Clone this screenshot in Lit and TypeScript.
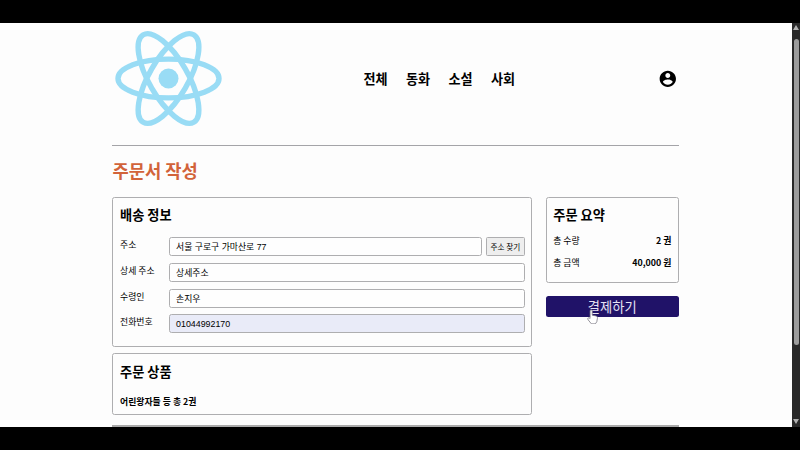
import { LitElement, html, css, svg } from "lit";
import { customElement } from "lit/decorators.js";

@customElement("app-root")
export class AppRoot extends LitElement {
  static styles = css`
    :host { display: block; width: 800px; height: 450px; overflow: hidden; background: #000;
      font-family: "Noto Sans CJK KR", sans-serif; font-size: 8.85px; color: #000; }
    * { box-sizing: border-box; }
    .screen { margin-top: 23px; height: 404px; display: flex; overflow: hidden; position: relative; }
    .page { width: 792px; background: #fdfdfd; padding-left: 112.4px; padding-right: 113px; overflow: hidden; }
    header { height: 123px; border-bottom: 1px solid #a4a4a8; display: grid; grid-template-columns: 110px 1fr 110px; }
    .logo { width: 110px; height: 110px; margin: 1px 0 0 0.6px; display: block; }
    nav { display: flex; gap: 18.4px; justify-content: center; font-weight: 700; font-size: 13.1px; line-height: 20px; padding-top: 46px; color: #000; margin-left: 87px; }
    .user { width: 19.6px; height: 19.6px; justify-self: end; margin: 45.8px 1.5px 0 0; }
    h1 { margin: 11px 0 14px; font-size: 17.7px; line-height: 26px; color: #d2633a; font-weight: 700; }
    .cols { display: flex; align-items: flex-start; gap: 13.2px; }
    .left { width: 420.2px; display: flex; flex-direction: column; gap: 6px; }
    .right { width: 133.5px; }
    .card { border: 1px solid #aeaeb0; border-radius: 2.5px; padding: 7px 6.7px; }
    .ship { height: 150px; }
    .items { height: 61.6px; padding-top: 8px; }
    .sum { height: 86px; }
    h2 { margin: 0; font-size: 13.2px; line-height: 20px; font-weight: 700; color: #000; }
    .fields { display: grid; gap: 6.6px; margin-top: 12.4px; }
    .row { display: flex; height: 19px; }
    .label { width: 48.5px; line-height: 15.4px; }
    .input { flex: 1; border: 1px solid #aeaeb0; border-radius: 2.5px; padding-left: 6.5px; line-height: 18px;
      font-family: "Liberation Sans", "Noto Sans CJK KR", sans-serif; background: #fefefe; }
    .filled { background: #e9ebf8; }
    .find { width: 38.5px; margin-left: 4.5px; border: 1px solid #aeaeb0; border-radius: 1.5px; background: #eeeeee;
      font-size: 7.6px; line-height: 18px; text-align: center; white-space: nowrap; }
    .line { display: flex; justify-content: space-between; line-height: 14px; margin-top: 8px; }
    .line:first-of-type { margin-top: 9px; }
    .bold { font-weight: 700; color: #000; }
    .goods { margin-top: 13px; line-height: 14px; }
    .pay { height: 20.6px; margin-top: 13px; border-radius: 2.5px; background: #201268; color: #e6e3f4; font-size: 13.3px;
      line-height: 21px; text-align: center; position: relative; }
    .cursor { position: absolute; left: 41.4px; top: 13px; width: 11px; height: 15.4px; }
    .end { height: 2px; margin-top: 10.6px; background: #aaaaaa; }
    .scroll { width: 8px; background: #292929; display: flex; flex-direction: column; align-items: center; }
    .thumb { width: 5px; height: 306px; border-radius: 3px; background: #9d9d9d; margin: 9px 0 74px; }
    .arrow { width: 6px; height: 5px; margin-top: 2px; display: block; flex: none; }
    .arrow.down { margin-top: 0; }
  `;

  private field(label: string, value: string, filled = false, find = false) {
    return html`<div class="row"><div class="label">${label}</div>
      <div class="input ${filled ? "filled" : ""}">${value}</div>
      ${find ? html`<div class="find">주소 찾기</div>` : ""}</div>`;
  }

  render() {
    return html`<div class="screen">
      <main class="page">
        <header>
          <svg class="logo" viewBox="-55.5 -54.5 110 110" fill="none" stroke="#99dcf5" stroke-width="5.4">
            ${[0, 60, 120].map((a) => svg`<ellipse rx="50.5" ry="19.4" transform="rotate(${a})"/>`)}
            <circle r="10" fill="#99dcf5" stroke="none" />
          </svg>
          <nav>${["전체", "동화", "소설", "사회"].map((t) => html`<span>${t}</span>`)}</nav>
          <svg class="user" viewBox="0 0 24 24"><path d="M12 2C6.48 2 2 6.48 2 12s4.48 10 10 10 10-4.48 10-10S17.52 2 12 2zm0 3c1.66 0 3 1.34 3 3s-1.34 3-3 3-3-1.34-3-3 1.34-3 3-3zm0 14.2c-2.500 0-4.710-1.280-6-3.220.03-1.990 4-3.080 6-3.080 1.990 0 5.970 1.090 6 3.080-1.290 1.940-3.500 3.220-6 3.220z"/></svg>
        </header>
        <h1>주문서 작성</h1>
        <div class="cols">
          <div class="left">
            <section class="card ship">
              <h2>배송 정보</h2>
              <div class="fields">
                ${this.field("주소", "서울 구로구 가마산로 77", false, true)}
                ${this.field("상세 주소", "상세주소")}
                ${this.field("수령인", "손지우")}
                ${this.field("전화번호", "01044992170", true)}
              </div>
            </section>
            <section class="card items">
              <h2>주문 상품</h2>
              <div class="goods bold">어린왕자들 등 총 2권</div>
            </section>
          </div>
          <div class="right">
            <section class="card sum">
              <h2>주문 요약</h2>
              <div class="line"><span>총 수량</span><span class="bold">2 권</span></div>
              <div class="line"><span>총 금액</span><span class="bold">40,000 원</span></div>
            </section>
            <div class="pay">결제하기
              <svg class="cursor" viewBox="0 0 10 14"><path d="M2.800 8V1.900C2.800.2 4.800.2 4.800 1.900V5.600L8.200 6.300C9.300 6.600 9.600 7.300 9.500 8.300L8.900 11.600 7.600 13.500H4L1 9.800C0 8.200 1.500 7.300 2.800 8.600z" fill="#fff" stroke="#77747f" stroke-width=".7"/></svg>
            </div>
          </div>
        </div>
        <div class="end"></div>
      </main>
      <div class="scroll">
        <svg class="arrow" viewBox="0 0 6 5"><path d="M3 0L6 5H0z" fill="#b0b0b0"/></svg>
        <div class="thumb"></div>
        <svg class="arrow down" viewBox="0 0 6 5"><path d="M3 5L6 0H0z" fill="#b0b0b0"/></svg>
      </div>
    </div>`;
  }
}
